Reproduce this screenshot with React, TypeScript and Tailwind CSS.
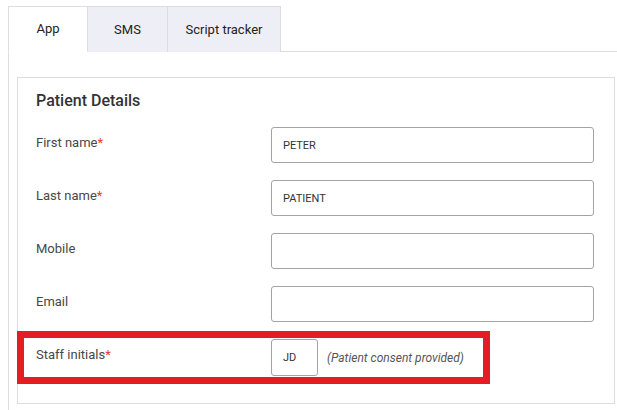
import React from "react";

const TABS = [
  { label: "App", width: "w-[80px]", active: true },
  { label: "SMS", width: "w-[80px]", active: false },
  { label: "Script tracker", width: "w-[113px]", active: false },
];

const FIELDS = [
  { label: "First name", required: true, value: "PETER" },
  { label: "Last name", required: true, value: "PATIENT" },
  { label: "Mobile", required: false, value: "" },
  { label: "Email", required: false, value: "" },
];

function Label({ text, required }: { text: string; required: boolean }) {
  return (
    <div className="w-[235px] shrink-0 pt-[6px] text-[13px] leading-5 text-[#474747]">
      {text}
      {required && <span className="text-[#e53935]">*</span>}
    </div>
  );
}

export default function App() {
  return (
    <div className="min-h-screen bg-white pl-2 pt-[6px] font-['Roboto',sans-serif]">
      {/* Tabs */}
      <div className="flex h-[46px] border-b border-[#ddd]">
        {TABS.map((t, i) => (
          <div
            key={t.label}
            className={`${t.width} flex h-[46px] items-center justify-center border-t border-r border-[#ddd] text-[13px] text-[#222] ${
              i === 0 ? "border-l" : ""
            } ${t.active ? "-mb-px border-b border-b-white bg-white" : "h-[45px] bg-[#eeeff6]"}`}
          >
            {t.label}
          </div>
        ))}
      </div>

      {/* Panel */}
      <div className="border-l border-[#ddd] pb-[10px] pl-2 pt-[25px]">
        <div className="w-[598px] border border-[#ddd] pb-[27px] pl-[18px] pr-[19px] pt-[11px]">
          <h2 className="text-[16px] font-medium leading-6 text-[#333]">Patient Details</h2>

          <div className="mt-[14px] flex flex-col gap-[17px]">
            {FIELDS.map(f => (
              <div key={f.label} className="flex items-start">
                <Label text={f.label} required={f.required} />
                <input
                  readOnly
                  value={f.value}
                  className="h-9 w-[323px] rounded-[3px] border border-[#a3a3a3] px-[11px] text-[11px] text-[#333] outline-none"
                />
              </div>
            ))}

            {/* Staff initials + annotation */}
            <div className="relative flex items-start">
              <div className="pointer-events-none absolute left-[-19px] top-[-8px] h-[53px] w-[473px] border-[7px] border-[#e41c23]" />
              <Label text="Staff initials" required />
              <div className="flex items-center">
                <input
                  readOnly
                  value="JD"
                  className="h-[37px] w-[47px] rounded-[3px] border border-[#a3a3a3] px-[11px] text-[11px] text-[#333] outline-none"
                />
                <span className="ml-[9px] text-[12px] italic text-[#555]">(Patient consent provided)</span>
              </div>
            </div>
          </div>
        </div>
      </div>
    </div>
  );
}
